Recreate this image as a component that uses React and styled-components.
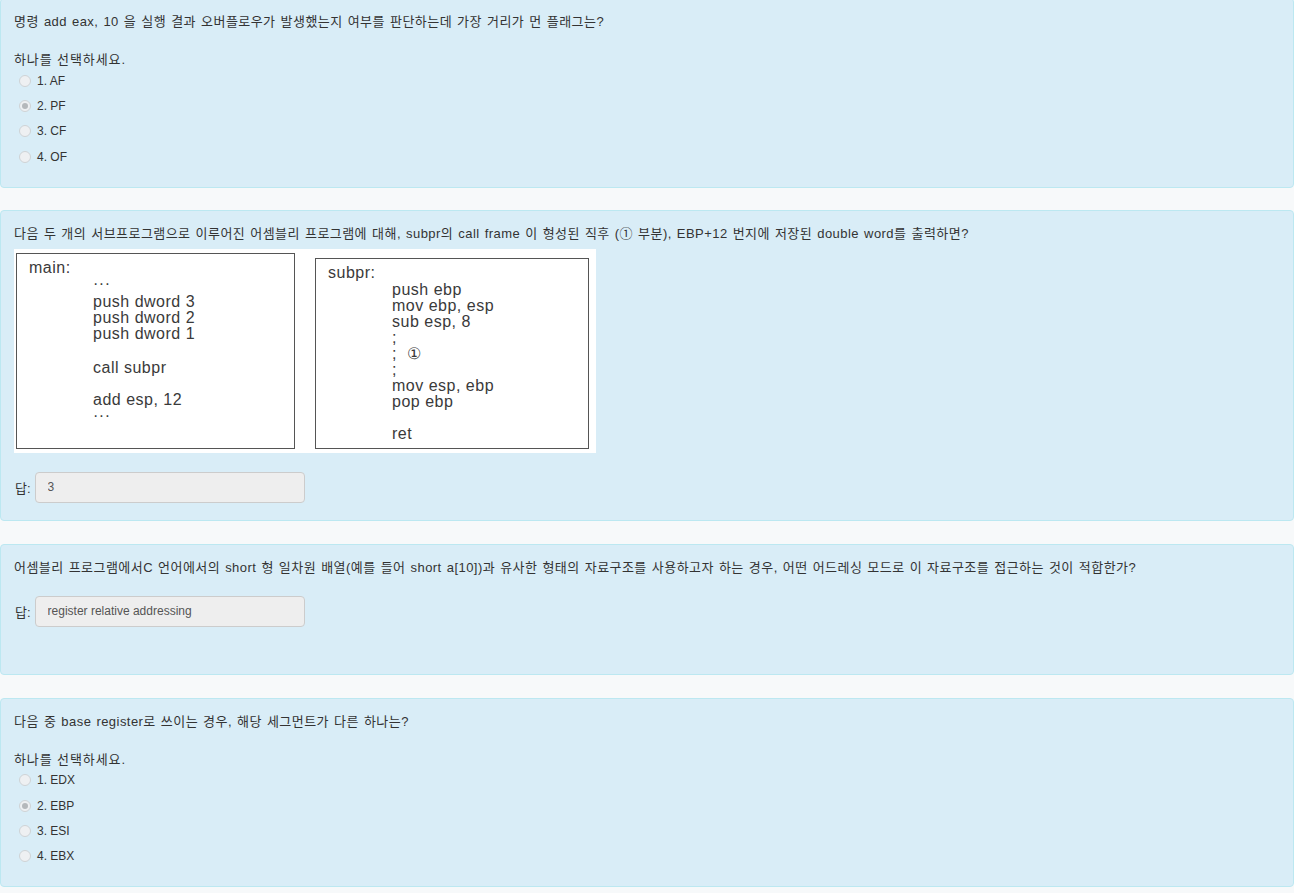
import React from 'react';
import styled, { createGlobalStyle } from 'styled-components';

const GlobalStyle = createGlobalStyle`
    html, body {
        margin: 0;
        padding: 0;
        background: #f7f9fa;
    }
    body {
        font-family: "Liberation Sans", "Noto Sans CJK KR", sans-serif;
        font-size: 12px;
        color: #333;
    }
`;

const QUESTIONS = [
    {
        id: 1,
        text: '명령 add eax, 10 을 실행 결과 오버플로우가 발생했는지 여부를 판단하는데 가장 거리가 먼 플래그는?',
        options: ['1. AF', '2. PF', '3. CF', '4. OF'],
        selected: 1,
    },
    {
        id: 2,
        text: '다음 두 개의 서브프로그램으로 이루어진 어셈블리 프로그램에 대해, subpr의 call frame 이 형성된 직후 (① 부분), EBP+12 번지에 저장된 double word를 출력하면?',
        code: true,
        answer: '3',
    },
    {
        id: 3,
        text: '어셈블리 프로그램에서C 언어에서의 short 형 일차원 배열(예를 들어 short a[10])과 유사한 형태의 자료구조를 사용하고자 하는 경우, 어떤 어드레싱 모드로 이 자료구조를 접근하는 것이 적합한가?',
        answer: 'register relative addressing',
        extraSpace: true,
    },
    {
        id: 4,
        text: '다음 중 base register로 쓰이는 경우, 해당 세그먼트가 다른 하나는?',
        options: ['1. EDX', '2. EBP', '3. ESI', '4. EBX'],
        selected: 1,
    },
];

// h = row height in px, so blank rows and dot rows keep the picture's spacing
const MAIN_LINES = [
    { t: '···', h: 18 },
    { t: 'push dword 3' },
    { t: 'push dword 2' },
    { t: 'push dword 1' },
    { t: '', h: 18 },
    { t: 'call subpr' },
    { t: '' },
    { t: 'add esp, 12' },
    { t: '···' },
];
const SUB_LINES = [
    { t: 'push ebp' },
    { t: 'mov ebp, esp' },
    { t: 'sub esp, 8' },
    { t: ';' },
    { t: ';  ①' },
    { t: ';' },
    { t: 'mov esp, ebp' },
    { t: 'pop ebp' },
    { t: '' },
    { t: 'ret' },
];

function CodeBox({ label, lines, tall }) {
    return (
        <Box $tall={tall}>
            <BoxLabel $tall={tall}>{label}</BoxLabel>
            {lines.map((line, i) => (
                <CodeLine key={i} $h={line.h || 16}>{line.t}</CodeLine>
            ))}
        </Box>
    );
}

function Question({ q }) {
    return (
        <Card $extra={q.extraSpace}>
            <QuestionText>{q.text}</QuestionText>
            {q.code && (
                <CodePanel>
                    <CodeBox label="main:" lines={MAIN_LINES} tall />
                    <CodeBox label="subpr:" lines={SUB_LINES} />
                </CodePanel>
            )}
            {q.options && (
                <>
                    <Prompt>하나를 선택하세요.</Prompt>
                    <OptionList>
                        {q.options.map((opt, i) => (
                            <Option key={opt}>
                                <Radio type="radio" disabled checked={i === q.selected} readOnly />
                                {opt}
                            </Option>
                        ))}
                    </OptionList>
                </>
            )}
            {q.answer !== undefined && (
                <AnswerRow $extra={q.extraSpace}>
                    <AnswerLabel>답:</AnswerLabel>
                    <AnswerInput value={q.answer} readOnly />
                </AnswerRow>
            )}
        </Card>
    );
}

export default function App() {
    return (
        <Page>
            <GlobalStyle />
            {QUESTIONS.map((q) => (
                <Question key={q.id} q={q} />
            ))}
        </Page>
    );
}

const Page = styled.div`
    display: flex;
    flex-direction: column;
    gap: 23px;
    padding-bottom: 10px;
`;

const Card = styled.section`
    background: #d9edf7;
    border: 1px solid #bce8f1;
    border-radius: 4px;
    padding: 14px 13px ${(p) => (p.$extra ? '47px' : '17px')};

    /* the first card is scrolled a little under the top edge */
    &:first-child {
        margin-top: -2px;
        margin-bottom: -1px;
    }
`;

const QuestionText = styled.div`
    font-size: 13px;
    line-height: 17px;
    letter-spacing: 0.45px;
    word-spacing: 1px;
`;

const Prompt = styled.div`
    margin-top: 21px;
    font-size: 13px;
    line-height: 17px;
    letter-spacing: 0.9px;
`;

const OptionList = styled.div`
    display: flex;
    flex-direction: column;
`;

const Option = styled.label`
    display: flex;
    align-items: center;
    height: 25.4px;
    padding-left: 5px;
`;

const Radio = styled.input`
    appearance: none;
    width: 12px;
    height: 12px;
    margin: 0 6px 0 0;
    border-radius: 50%;
    border: 1px solid #cfd3d6;
    background: #eef0f2;
    box-sizing: border-box;
    position: relative;

    &:checked::after {
        content: '';
        position: absolute;
        left: 2px;
        top: 2px;
        width: 6px;
        height: 6px;
        border-radius: 50%;
        background: #b5b8bb;
    }
`;

const CodePanel = styled.div`
    display: inline-flex;
    align-items: flex-end;
    gap: 20px;
    margin-top: 7px;
    padding: 4px 7px 4px 2px;
    background: #fff;
`;

const Box = styled.div`
    box-sizing: border-box;
    width: ${(p) => (p.$tall ? '279px' : '274px')};
    height: ${(p) => (p.$tall ? '196px' : '191px')};
    border: 1.5px solid #555;
    padding: 6px 0 0 12px;
    font-family: "Liberation Sans", Arial, sans-serif;
    font-size: 16px;
    letter-spacing: 0.5px;
    color: #3a3a3a;
`;

const BoxLabel = styled.div`
    line-height: 16px;
    margin-bottom: ${(p) => (p.$tall ? '0' : '1px')};
`;

const CodeLine = styled.div`
    padding-left: 64px;
    line-height: 16px;
    height: ${(p) => p.$h}px;
    white-space: pre;
`;

const AnswerRow = styled.div`
    display: flex;
    align-items: center;
    gap: 4px;
    margin-top: ${(p) => (p.$extra ? '20px' : '19px')};
    padding-left: 1px;
`;

const AnswerLabel = styled.span`
    font-size: 13px;
`;

const AnswerInput = styled.input`
    box-sizing: border-box;
    width: 270px;
    height: 31px;
    padding: 0 12px;
    border: 1px solid #ccc;
    border-radius: 4px;
    background: #eee;
    font-family: "Liberation Sans", "Noto Sans CJK KR", sans-serif;
    font-size: 12px;
    color: #555;
    outline: none;
`;
